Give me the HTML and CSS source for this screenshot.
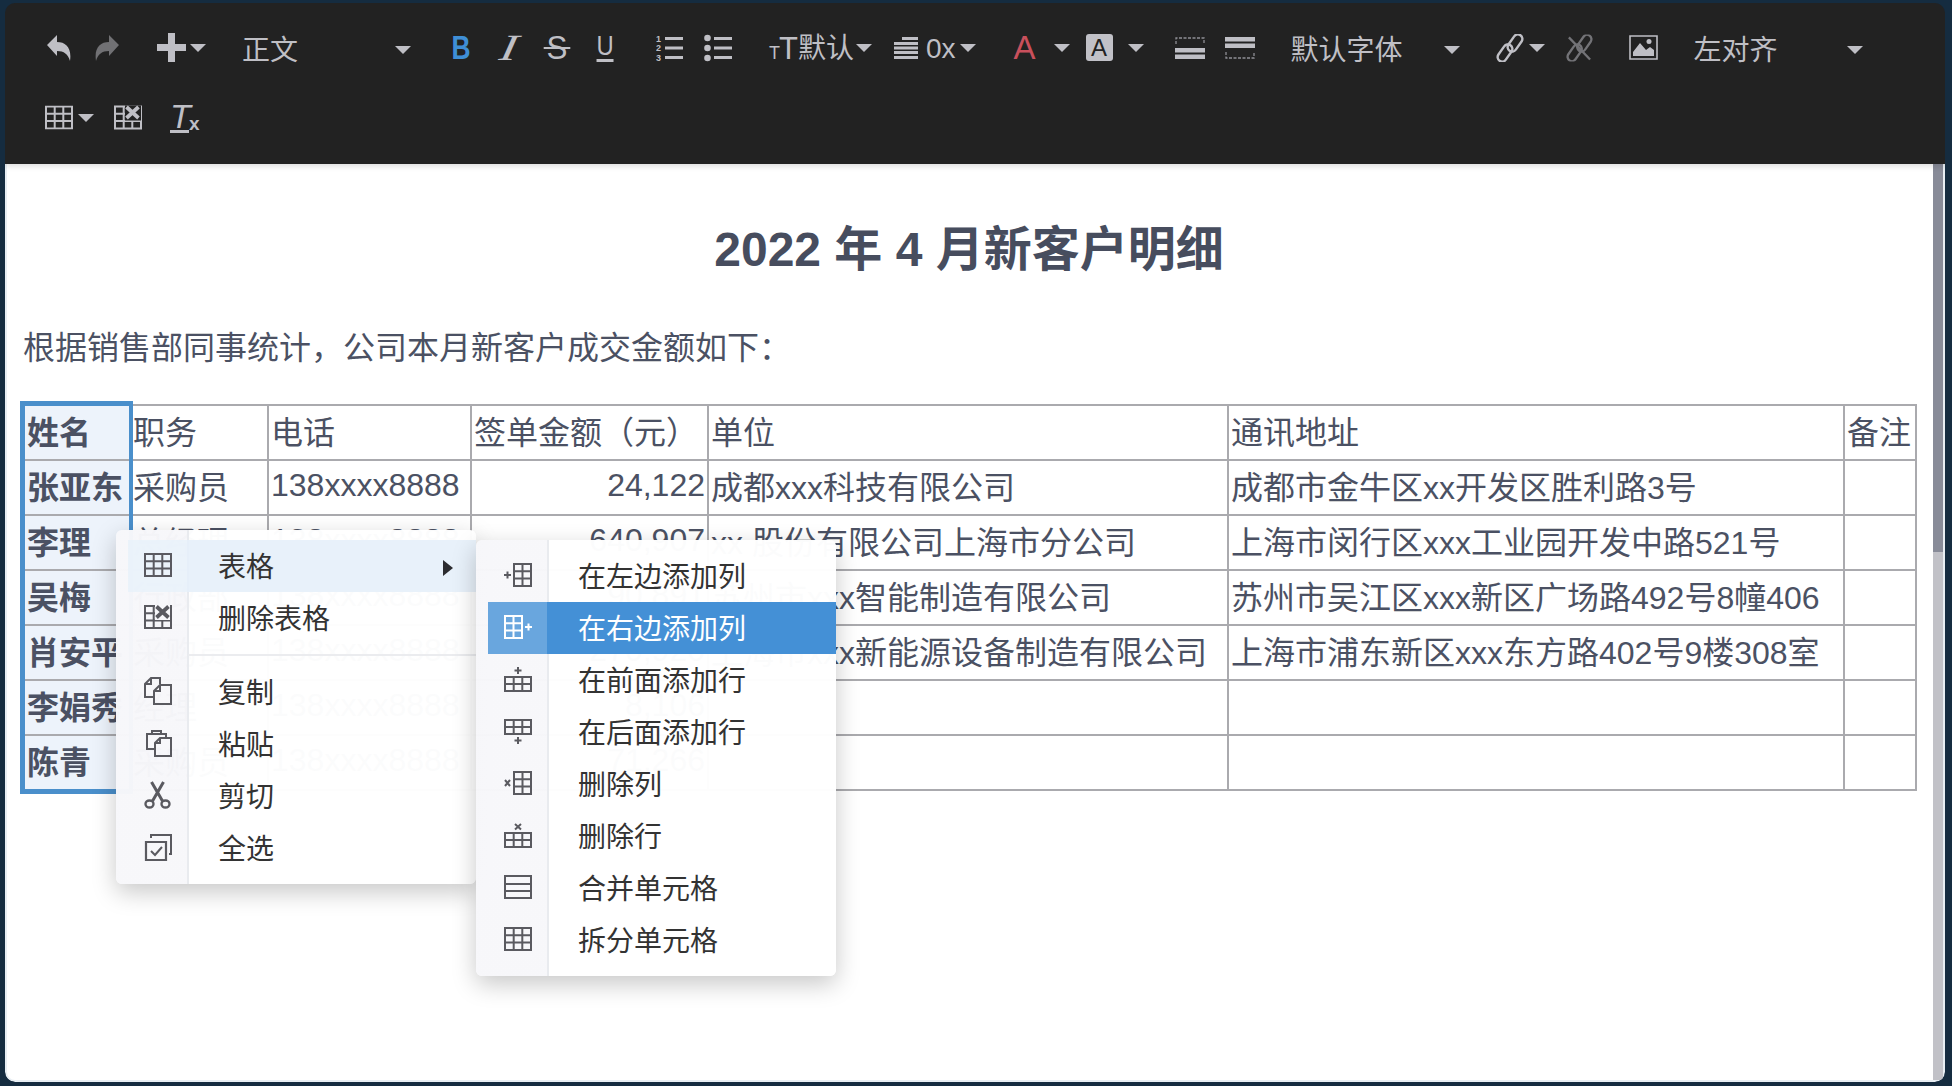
FILE: index.html
```html
<!DOCTYPE html>
<html lang="zh-CN">
<head>
    <meta charset="UTF-8">
    <title>2022 年 4 月新客户明细</title>
    <link rel="stylesheet" href="styles.css">
</head>
<body>
    <svg class="sprites" width="0" height="0">
        <defs>
            <symbol id="i-grid" viewBox="0 0 28 24"><path d="M1 1h26v22H1zM1 8.300h26M1 15.600h26M9.700 1v22M18.300 1v22" fill="none" stroke="currentColor" stroke-width="2"/></symbol>
            <symbol id="i-del-table" viewBox="0 0 28 24"><path d="M1 1h26v22H1zM1 8.300h26M1 15.600h26M9.700 1v22M18.300 1v22" fill="none" stroke="currentColor" stroke-width="2"/><path d="M11 0h17v15H11z" fill="#f7f7fa"/><path d="M12.500 1.500l12 11M24.500 1.500l-12 11" stroke="currentColor" stroke-width="3.800" fill="none"/><path d="M27 0v15" stroke="currentColor" stroke-width="2"/></symbol>
            <symbol id="i-copy" viewBox="0 0 28 28"><path d="M9 20H1V7l6-6h9v6" fill="none" stroke="currentColor" stroke-width="2"/><path d="M1 7h6V1" fill="none" stroke="currentColor" stroke-width="2"/><path d="M10 27V14l6-6h11v19zM10 14h6V8" fill="none" stroke="currentColor" stroke-width="2"/></symbol>
            <symbol id="i-paste" viewBox="0 0 28 28"><path d="M10 20H3V5h19v4" fill="none" stroke="currentColor" stroke-width="2"/><path d="M8 5V2h9v3" fill="none" stroke="currentColor" stroke-width="2"/><path d="M11 27V14l5-5h11v18zM11 14h5V9" fill="none" stroke="currentColor" stroke-width="2"/></symbol>
            <symbol id="i-cut" viewBox="0 0 28 28"><ellipse cx="5.500" cy="23" rx="4" ry="3.500" fill="none" stroke="currentColor" stroke-width="2.400"/><ellipse cx="21.500" cy="23" rx="4" ry="3.500" fill="none" stroke="currentColor" stroke-width="2.400"/><path d="M8.500 20 19.500 1M18.500 20 7.500 1" fill="none" stroke="currentColor" stroke-width="3"/></symbol>
            <symbol id="i-select" viewBox="0 0 28 28"><path d="M2 9h20v18H2z" fill="none" stroke="currentColor" stroke-width="2.200"/><path d="M7 5V2h20v19h-2" fill="none" stroke="currentColor" stroke-width="2"/><path d="M7 18l4 4 7-8" fill="none" stroke="currentColor" stroke-width="2"/></symbol>
            <symbol id="i-col-left" viewBox="0 0 28 24"><path d="M10 1h17v22H10zM10 8.300h17M10 15.600h17M18.500 1v22" fill="none" stroke="currentColor" stroke-width="2"/><path d="M0 12h7M3.500 8.500v7" stroke="currentColor" stroke-width="2"/></symbol>
            <symbol id="i-col-right" viewBox="0 0 28 24"><path d="M1 1h17v22H1zM1 8.300h17M1 15.600h17M9.500 1v22" fill="none" stroke="currentColor" stroke-width="2"/><path d="M21 12h7M24.500 8.500v7" stroke="currentColor" stroke-width="2"/></symbol>
            <symbol id="i-row-above" viewBox="0 0 28 25"><path d="M1 10h26v14H1zM1 17h26M9.700 10v14M18.300 10v14" fill="none" stroke="currentColor" stroke-width="2"/><path d="M10.500 3.500h7M14 0v7" stroke="currentColor" stroke-width="2"/></symbol>
            <symbol id="i-row-below" viewBox="0 0 28 25"><path d="M1 1h26v14H1zM1 8h26M9.700 1v14M18.300 1v14" fill="none" stroke="currentColor" stroke-width="2"/><path d="M10.500 21.500h7M14 18v7" stroke="currentColor" stroke-width="2"/></symbol>
            <symbol id="i-del-col" viewBox="0 0 28 24"><path d="M10 1h17v22H10zM10 8.300h17M10 15.600h17M18.500 1v22" fill="none" stroke="currentColor" stroke-width="2"/><path d="M1 9l5 6M6 9l-5 6" stroke="currentColor" stroke-width="2"/></symbol>
            <symbol id="i-del-row" viewBox="0 0 28 25"><path d="M1 10h26v14H1zM1 17h26M9.700 10v14M18.300 10v14" fill="none" stroke="currentColor" stroke-width="2"/><path d="M11 1l6 5.500M17 1l-6 5.500" stroke="currentColor" stroke-width="2"/></symbol>
            <symbol id="i-merge" viewBox="0 0 28 24"><path d="M1 1h26v22H1zM1 9h26M1 16h26" fill="none" stroke="currentColor" stroke-width="2"/></symbol>
            <symbol id="i-chain" viewBox="0 0 28 28"><g fill="none" stroke="currentColor" stroke-width="2.400"><rect x="-9.500" y="-4.500" width="19" height="9" rx="4.500" transform="translate(9 19) rotate(-55)"/><rect x="-9.500" y="-4.500" width="19" height="9" rx="4.500" transform="translate(19 9) rotate(-55)"/></g></symbol>
        </defs>
    </svg>

    <div id="app">
        <div class="toolbar">
            <div class="tb-row">
                <span class="tb-btn">
                    <svg width="24" height="28" viewBox="0 0 24 28"><path d="M0 11 10 1v7c9 0 15 6 13 19-2-7-6-10-13-10v5z" fill="currentColor"/></svg>
                </span>
                <span class="tb-btn is-dim">
                    <svg class="flip" width="24" height="28" viewBox="0 0 24 28"><path d="M0 11 10 1v7c9 0 15 6 13 19-2-7-6-10-13-10v5z" fill="currentColor"/></svg>
                </span>
                <span class="tb-drop tb-insert">
                    <svg width="29" height="29" viewBox="0 0 29 29"><path d="M11 0h7v11h11v7H18v11h-7V18H0v-7h11z" fill="currentColor"/></svg>
                    <i class="caret"></i>
                </span>
                <span class="tb-select tb-format">正文<i class="caret"></i></span>

                <span class="tb-btn tb-bold"><b class="glyph-b">B</b></span>
                <span class="tb-btn"><em class="glyph-i">I</em></span>
                <span class="tb-btn"><span class="glyph-s">S</span></span>
                <span class="tb-btn"><span class="glyph-u">U</span></span>

                <span class="tb-btn tb-list">
                    <svg width="28" height="28" viewBox="0 0 28 28">
                        <text x="0" y="8" class="ol-num">1</text><text x="0" y="17" class="ol-num">2</text><text x="0" y="27" class="ol-num">3</text>
                        <path d="M9 3h18v3H9zM9 12.500h18v3H9zM9 22h18v3H9z" fill="currentColor"/>
                    </svg>
                </span>
                <span class="tb-btn">
                    <svg width="28" height="28" viewBox="0 0 28 28">
                        <circle cx="3.500" cy="4" r="3.300" fill="currentColor"/><circle cx="3.500" cy="14" r="3.300" fill="currentColor"/><circle cx="3.500" cy="24" r="3.300" fill="currentColor"/>
                        <path d="M10 3h18v3H10zM10 12.500h18v3H10zM10 22h18v3H10z" fill="currentColor"/>
                    </svg>
                </span>

                <span class="tb-drop tb-size"><span class="glyph-tt"><small>T</small>T</span><span class="tb-label">默认</span><i class="caret"></i></span>
                <span class="tb-drop tb-height">
                    <svg width="24" height="22" viewBox="0 0 24 22"><path d="M8 0h16v3H8zM0 5h24v3H0zM0 9.500h24v3H0zM0 14h24v3H0zM0 19h24v3H0z" fill="currentColor"/></svg>
                    <span class="tb-label tb-zero">0x</span><i class="caret"></i>
                </span>

                <span class="tb-drop tb-color"><span class="glyph-a">A</span><i class="caret"></i></span>
                <span class="tb-drop tb-bg"><span class="glyph-box">A</span><i class="caret"></i></span>

                <span class="tb-border tb-border-1">
                    <svg width="30" height="22" viewBox="0 0 30 22"><path d="M1 7V1h28v6" fill="none" stroke="#8f8f95" stroke-width="1.300" stroke-dasharray="3 1.500"/><path d="M0 11h30v4.500H0zM0 17.500h30V22H0z" fill="currentColor"/></svg>
                </span>
                <span class="tb-border tb-border-2">
                    <svg width="30" height="22" viewBox="0 0 30 22"><path d="M0 0h30v4.500H0zM0 6.500h30V11H0z" fill="currentColor"/><path d="M1 15v6h28v-6" fill="none" stroke="#8f8f95" stroke-width="1.300" stroke-dasharray="3 1.500"/></svg>
                </span>

                <span class="tb-select tb-font">默认字体<i class="caret"></i></span>

                <span class="tb-drop tb-link">
                    <svg width="28" height="28"><use href="#i-chain"/></svg>
                    <i class="caret"></i>
                </span>
                <span class="tb-unlink">
                    <svg width="27" height="28" viewBox="0 0 28 28"><use href="#i-chain"/><path d="M3 3l22 23" stroke="currentColor" stroke-width="2.400"/></svg>
                </span>
                <span class="tb-image">
                    <svg width="29" height="25" viewBox="0 0 29 25"><path d="M1 1h27v23H1z" fill="none" stroke="currentColor" stroke-width="1.600"/><path d="M4 21V17l7-9 6 7 4-3 4 3v6z" fill="currentColor"/><circle cx="20" cy="6.500" r="2.500" fill="currentColor"/></svg>
                </span>
                <span class="tb-select tb-align">左对齐<i class="caret"></i></span>
            </div>
            <div class="tb-row">
                <span class="tb-drop tb-table">
                    <svg width="28" height="25" viewBox="0 0 28 24"><use href="#i-grid"/></svg>
                    <i class="caret"></i>
                </span>
                <span class="tb-deltable">
                    <svg width="28" height="25" viewBox="0 0 28 24"><path d="M1 1h26v22H1zM1 8.300h26M1 15.600h26M9.700 1v22M18.300 1v22" fill="none" stroke="currentColor" stroke-width="2"/><path d="M11 0h16v15H11z" fill="#222"/><path d="M12.500 1.500l12 11M24.500 1.500l-12 11" stroke="currentColor" stroke-width="3.800"/></svg>
                </span>
                <span class="tb-clear"><span class="glyph-t">T</span><span class="glyph-x">x</span></span>
            </div>
        </div>

        <div class="editor">
            <div class="doc">
                <h1 class="doc-title">2022 年 4 月新客户明细</h1>
                <p class="doc-text">根据销售部同事统计，公司本月新客户成交金额如下：</p>
                <div class="table-wrap">
                    <table class="sheet">
                        <colgroup>
                            <col class="c-name"><col class="c-role"><col class="c-tel"><col class="c-amount"><col class="c-org"><col class="c-addr"><col class="c-note">
                        </colgroup>
                        <tr><td class="sel">姓名</td><td>职务</td><td>电话</td><td>签单金额（元）</td><td>单位</td><td>通讯地址</td><td>备注</td></tr>
                        <tr><td class="sel">张亚东</td><td>采购员</td><td>138xxxx8888</td><td class="num">24,122</td><td>成都xxx科技有限公司</td><td>成都市金牛区xx开发区胜利路3号</td><td></td></tr>
                        <tr><td class="sel">李理</td><td>总经理</td><td>138xxxx8888</td><td class="num">640,907</td><td>xx 股份有限公司上海市分公司</td><td>上海市闵行区xxx工业园开发中路521号</td><td></td></tr>
                        <tr><td class="sel">吴梅</td><td>行政部</td><td>138xxxx8888</td><td class="num">90,891</td><td>苏州市xxx智能制造有限公司</td><td>苏州市吴江区xxx新区广场路492号8幢406</td><td></td></tr>
                        <tr><td class="sel">肖安平</td><td>采购员</td><td>138xxxx8888</td><td class="num">270,920</td><td>上海市xxx新能源设备制造有限公司</td><td>上海市浦东新区xxx东方路402号9楼308室</td><td></td></tr>
                        <tr><td class="sel">李娟秀</td><td>经理</td><td>138xxxx8888</td><td class="num">8,106</td><td></td><td></td><td></td></tr>
                        <tr><td class="sel">陈青</td><td>采购员</td><td>138xxxx8888</td><td class="num">71,266</td><td></td><td></td><td></td></tr>
                    </table>
                    <div class="col-select"></div>
                </div>
            </div>
            <div class="scrollbar"><div class="scroll-thumb"></div></div>

            <!-- 右键菜单 -->
            <div class="menu context-menu">
                <div class="menu-item is-hover">
                    <span class="menu-icon"><svg width="28" height="24"><use href="#i-grid"/></svg></span>
                    <span class="menu-label">表格</span>
                    <i class="menu-arrow"></i>

                    <div class="menu submenu">
                        <div class="menu-item">
                            <span class="menu-icon"><svg width="28" height="24"><use href="#i-col-left"/></svg></span>
                            <span class="menu-label">在左边添加列</span>
                        </div>
                        <div class="menu-item is-active">
                            <span class="menu-icon"><svg width="28" height="24"><use href="#i-col-right"/></svg></span>
                            <span class="menu-label">在右边添加列</span>
                        </div>
                        <div class="menu-item">
                            <span class="menu-icon"><svg width="28" height="25"><use href="#i-row-above"/></svg></span>
                            <span class="menu-label">在前面添加行</span>
                        </div>
                        <div class="menu-item">
                            <span class="menu-icon"><svg width="28" height="25"><use href="#i-row-below"/></svg></span>
                            <span class="menu-label">在后面添加行</span>
                        </div>
                        <div class="menu-item">
                            <span class="menu-icon"><svg width="28" height="24"><use href="#i-del-col"/></svg></span>
                            <span class="menu-label">删除列</span>
                        </div>
                        <div class="menu-item">
                            <span class="menu-icon"><svg width="28" height="25"><use href="#i-del-row"/></svg></span>
                            <span class="menu-label">删除行</span>
                        </div>
                        <div class="menu-item">
                            <span class="menu-icon"><svg width="28" height="24"><use href="#i-merge"/></svg></span>
                            <span class="menu-label">合并单元格</span>
                        </div>
                        <div class="menu-item">
                            <span class="menu-icon"><svg width="28" height="24"><use href="#i-grid"/></svg></span>
                            <span class="menu-label">拆分单元格</span>
                        </div>
                    </div>
                </div>
                <div class="menu-item">
                    <span class="menu-icon"><svg width="28" height="24"><use href="#i-del-table"/></svg></span>
                    <span class="menu-label">删除表格</span>
                </div>
                <div class="menu-divider"></div>
                <div class="menu-item">
                    <span class="menu-icon"><svg width="28" height="28"><use href="#i-copy"/></svg></span>
                    <span class="menu-label">复制</span>
                </div>
                <div class="menu-item">
                    <span class="menu-icon"><svg width="28" height="28"><use href="#i-paste"/></svg></span>
                    <span class="menu-label">粘贴</span>
                </div>
                <div class="menu-item">
                    <span class="menu-icon"><svg width="28" height="28"><use href="#i-cut"/></svg></span>
                    <span class="menu-label">剪切</span>
                </div>
                <div class="menu-item">
                    <span class="menu-icon"><svg width="28" height="28"><use href="#i-select"/></svg></span>
                    <span class="menu-label">全选</span>
                </div>
            </div>
        </div>
    </div>
</body>
</html>
```

FILE: styles.css
```css
* {
    box-sizing: border-box;
    margin: 0;
    padding: 0;
}
html, body {
    height: 100%;
    overflow: hidden;
    background-color: #152c40;
    font-family: "Liberation Sans", "Noto Sans CJK SC", sans-serif;
}
.sprites {
    position: absolute;
}
#app {
    display: flex;
    flex-direction: column;
    height: 1079px;
    margin: 3px 7px 0 5px;
    border-radius: 10px;
    overflow: hidden;
}

/* 工具栏 */
.toolbar {
    flex: none;
    height: 161px;
    padding: 10px 0 0 30px;
    background-color: #222;
    color: #bfbfc5;
    box-shadow: 0 2px 6px rgba(0, 0, 0, 0.15);
    position: relative;
    z-index: 2;
}
.tb-row {
    display: flex;
    align-items: center;
    height: 69px;
}
.tb-row + .tb-row {
    margin-top: 1px;
}
.tb-row span, .tb-row i {
    flex: none;
}
.tb-btn {
    display: flex;
    justify-content: center;
    align-items: center;
    width: 48px;
}
.is-dim {
    opacity: 0.5;
}
.flip {
    transform: scaleX(-1);
}
.caret {
    display: block;
    width: 0;
    height: 0;
    border-left: 8px solid transparent;
    border-right: 8px solid transparent;
    border-top: 8px solid #bfbfc5;
}
.tb-drop {
    display: flex;
    align-items: center;
}
.tb-select {
    display: flex;
    justify-content: space-between;
    align-items: center;
    width: 169px;
    margin-top: 6px;
    font-size: 28px;
    line-height: 40px;
}
.tb-select .caret {
    margin-top: -1px;
}
.tb-label {
    margin-top: 2px;
    font-size: 28px;
    line-height: 40px;
}
.tb-insert { margin-left: 26px; gap: 4px; }
.tb-format { margin-left: 36px; }
.tb-bold { margin-left: 26px; color: #3f8fd6; }
.glyph-b {
    font-size: 33px;
    transform: scaleX(0.8);
}
.glyph-i {
    font-family: "Liberation Serif", serif;
    font-size: 37px;
    transform: scaleX(1.4) skewX(-8deg);
}
.glyph-s {
    position: relative;
    font-size: 33px;
    transform: scaleX(0.95);
}
.glyph-s::after {
    content: "";
    position: absolute;
    left: -3px;
    right: -3px;
    top: 18px;
    height: 2px;
    background-color: #bfbfc5;
}
.glyph-u {
    font-size: 28px;
    line-height: 26px;
    border-bottom: 3px solid #bfbfc5;
    transform: scaleX(0.85);
}
.tb-list { margin-left: 17px; }
.ol-num {
    font-size: 9px;
    font-weight: bold;
    fill: currentColor;
}
.tb-size { margin-left: 27px; }
.glyph-tt {
    width: 29px;
    margin-top: 6px;
    font-size: 31px;
    line-height: 30px;
    letter-spacing: -1px;
}
.glyph-tt small {
    font-size: 18px;
}
.tb-size .caret { margin-left: 2px; }
.tb-height { margin-left: 22px; }
.tb-zero { margin-left: 8px; }
.tb-height .caret { margin-left: 4px; }
.tb-color { margin-left: 38px; }
.glyph-a {
    width: 22px;
    font-size: 33px;
    color: #c9505c;
    line-height: 36px;
}
.tb-color .caret { margin-left: 18px; }
.tb-bg { margin-left: 16px; }
.glyph-box {
    display: block;
    width: 27px;
    height: 27px;
    border-radius: 3px;
    background-color: #c1c1c7;
    color: #222;
    font-size: 24px;
    line-height: 27px;
    text-align: center;
}
.tb-bg .caret { margin-left: 15px; }
.tb-border { display: flex; }
.tb-border-1 { margin-left: 31px; }
.tb-border-2 { margin-left: 20px; }
.tb-font { margin-left: 36px; }
.tb-link { margin-left: 36px; gap: 5px; }
.tb-unlink { display: flex; margin-left: 21px; color: #737377; }
.tb-image { display: flex; margin-left: 36px; }
.tb-align { margin-left: 36px; }
.tb-table { margin-left: 10px; gap: 5px; }
.tb-deltable { display: flex; margin-left: 20px; }
.tb-clear {
    display: flex;
    align-items: flex-end;
    margin-left: 28px;
    line-height: 30px;
}
.glyph-t {
    width: 19px;
    border-bottom: 3px solid #bfbfc5;
    font-style: italic;
    font-size: 34px;
    line-height: 28px;
}
.glyph-x {
    font-weight: bold;
    font-size: 19px;
    line-height: 19px;
}

/* 编辑区 */
.editor {
    flex: 1;
    display: flex;
    min-height: 0;
    position: relative;
    background-color: #fff;
    border: 2px solid #e8eef3;
    border-top: none;
    border-radius: 0 0 10px 10px;
}
.doc {
    flex: 1;
    min-width: 0;
    padding: 56px 16px 0 14px;
    color: #4b5163;
    font-size: 32px;
}
.doc-title {
    font-size: 48px;
    line-height: 60px;
    text-align: center;
    color: #474d5e;
}
.doc-text {
    margin-top: 46px;
    padding-left: 2px;
    line-height: 44px;
}
.table-wrap {
    margin-top: 34px;
    position: relative;
}
.sheet {
    width: 100%;
    table-layout: fixed;
    border-collapse: collapse;
}
.c-name { width: 108px; }
.c-role { width: 138px; }
.c-tel { width: 203px; }
.c-amount { width: 237px; }
.c-org { width: 520px; }
.c-addr { width: 616px; }
.c-note { width: 72px; }
.sheet td {
    height: 55px;
    padding: 0 2px 5px;
    border: 2px solid #aaaaae;
    white-space: nowrap;
    overflow: hidden;
}
.sheet .sel {
    padding-left: 4px;
    font-weight: bold;
    background-color: #edf3fb;
}
.sheet .num {
    text-align: right;
}
.col-select {
    position: absolute;
    left: -1px;
    top: -3px;
    width: 113px;
    height: 393px;
    border: 5px solid #4a8fcb;
    border-right-width: 4px;
}
.scrollbar {
    flex: none;
    width: 10px;
    background-color: #c1c1c7;
}
.scroll-thumb {
    height: 388px;
    background-color: #888b98;
}

/* 右键菜单 */
.menu {
    position: absolute;
    width: 360px;
    padding: 10px 0 10px 12px;
    border-radius: 6px;
    color: #333;
    background: linear-gradient(90deg, rgba(247, 247, 250, 0.98) 71px, #e9ebef 71px, #e9ebef 73px, rgba(255, 255, 255, 0.98) 73px);
    box-shadow: 0 8px 24px rgba(0, 0, 0, 0.22);
}
.context-menu {
    left: 109px;
    top: 366px;
}
.submenu {
    left: 100%;
    top: 0;
    z-index: 1;
}
.menu-item {
    display: flex;
    align-items: center;
    height: 52px;
    position: relative;
    font-size: 28px;
}
.menu-icon {
    display: flex;
    justify-content: center;
    align-items: center;
    flex: none;
    width: 59px;
    height: 100%;
    padding-bottom: 2px;
    color: #5a5a60;
}
.menu-label {
    margin-left: 31px;
    padding-bottom: 3px;
    white-space: nowrap;
}
.menu-arrow {
    position: absolute;
    right: 23px;
    top: 20px;
    border-top: 8px solid transparent;
    border-bottom: 8px solid transparent;
    border-left: 10px solid #2c2c30;
}
.menu-divider {
    height: 2px;
    margin: 10px 0 10px 60px;
    background-color: #ebecef;
}
.is-hover {
    background-color: rgba(230, 240, 250, 0.9);
}
.is-hover > .menu-icon {
    background-color: rgba(255, 255, 255, 0.15);
}
.is-active {
    background-color: #4490d6;
    color: #fff;
}
.is-active .menu-icon {
    background-color: rgba(255, 255, 255, 0.2);
    color: #fff;
}
```
